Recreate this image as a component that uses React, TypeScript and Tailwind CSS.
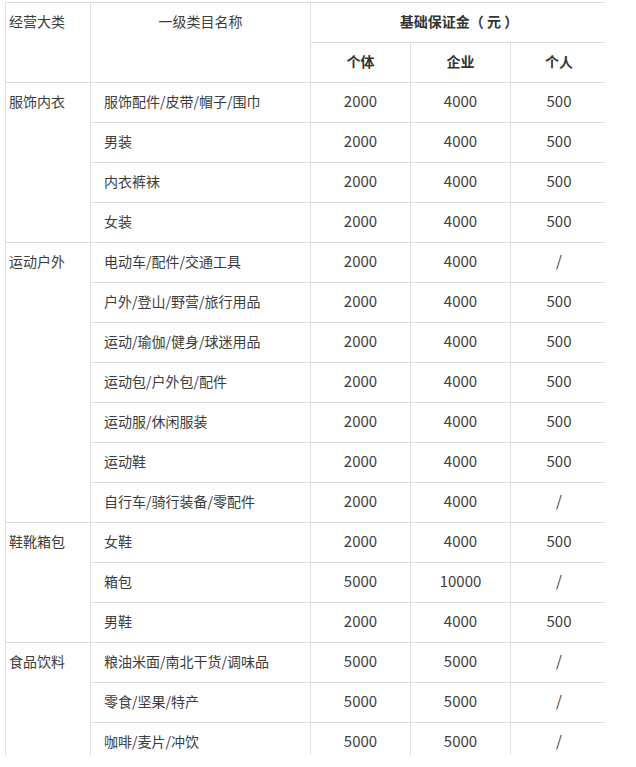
const GROUPS: { name: string; rows: [string, string, string, string][] }[] = [
  {
    name: '服饰内衣',
    rows: [
      ['服饰配件/皮带/帽子/围巾', '2000', '4000', '500'],
      ['男装', '2000', '4000', '500'],
      ['内衣裤袜', '2000', '4000', '500'],
      ['女装', '2000', '4000', '500'],
    ],
  },
  {
    name: '运动户外',
    rows: [
      ['电动车/配件/交通工具', '2000', '4000', '/'],
      ['户外/登山/野营/旅行用品', '2000', '4000', '500'],
      ['运动/瑜伽/健身/球迷用品', '2000', '4000', '500'],
      ['运动包/户外包/配件', '2000', '4000', '500'],
      ['运动服/休闲服装', '2000', '4000', '500'],
      ['运动鞋', '2000', '4000', '500'],
      ['自行车/骑行装备/零配件', '2000', '4000', '/'],
    ],
  },
  {
    name: '鞋靴箱包',
    rows: [
      ['女鞋', '2000', '4000', '500'],
      ['箱包', '5000', '10000', '/'],
      ['男鞋', '2000', '4000', '500'],
    ],
  },
  {
    name: '食品饮料',
    rows: [
      ['粮油米面/南北干货/调味品', '5000', '5000', '/'],
      ['零食/坚果/特产', '5000', '5000', '/'],
      ['咖啡/麦片/冲饮', '5000', '5000', '/'],
    ],
  },
];

const cell = 'border border-[#dedede] h-10 align-top pt-[8px] pb-0 leading-5';
const num = `${cell} text-center text-[15px]`;

export default function App() {
  return (
    <div
      className="bg-white w-[636px] h-[767px] pl-[5px] pt-[2px]"
      style={{ fontFamily: '"Noto Sans CJK SC", "Noto Sans", sans-serif' }}
    >
      <div className="w-[600px] h-[753px] overflow-hidden">
        <table className="border-collapse table-fixed w-[602px] text-[14px] text-[#3c3c3c]">
          <colgroup>
            <col className="w-[85px]" />
            <col className="w-[220px]" />
            <col className="w-[100px]" />
            <col className="w-[100px]" />
            <col className="w-[97px]" />
          </colgroup>
          <thead>
            <tr>
              <td rowSpan={2} className={`${cell} pl-[3px] text-left`}>
                经营大类
              </td>
              <td rowSpan={2} className={`${cell} text-center`}>
                一级类目名称
              </td>
              <td colSpan={3} className={`${cell} text-center font-bold text-[#333]`}>
                基础保证金（ 元 ）
              </td>
            </tr>
            <tr>
              <td className={`${cell} text-center font-bold text-[#333]`}>个体</td>
              <td className={`${cell} text-center font-bold text-[#333]`}>企业</td>
              <td className={`${cell} text-center font-bold text-[#333]`}>个人</td>
            </tr>
          </thead>
          <tbody>
            {GROUPS.map((g) =>
              g.rows.map((r, i) => (
                <tr key={g.name + r[0]}>
                  {i === 0 && (
                    <td rowSpan={g.rows.length} className={`${cell} pl-[3px] text-left`}>
                      {g.name}
                    </td>
                  )}
                  <td className={`${cell} pl-[13px] text-left`}>{r[0]}</td>
                  <td className={num}>{r[1]}</td>
                  <td className={num}>{r[2]}</td>
                  <td className={num}>{r[3]}</td>
                </tr>
              ))
            )}
          </tbody>
        </table>
      </div>
    </div>
  );
}
